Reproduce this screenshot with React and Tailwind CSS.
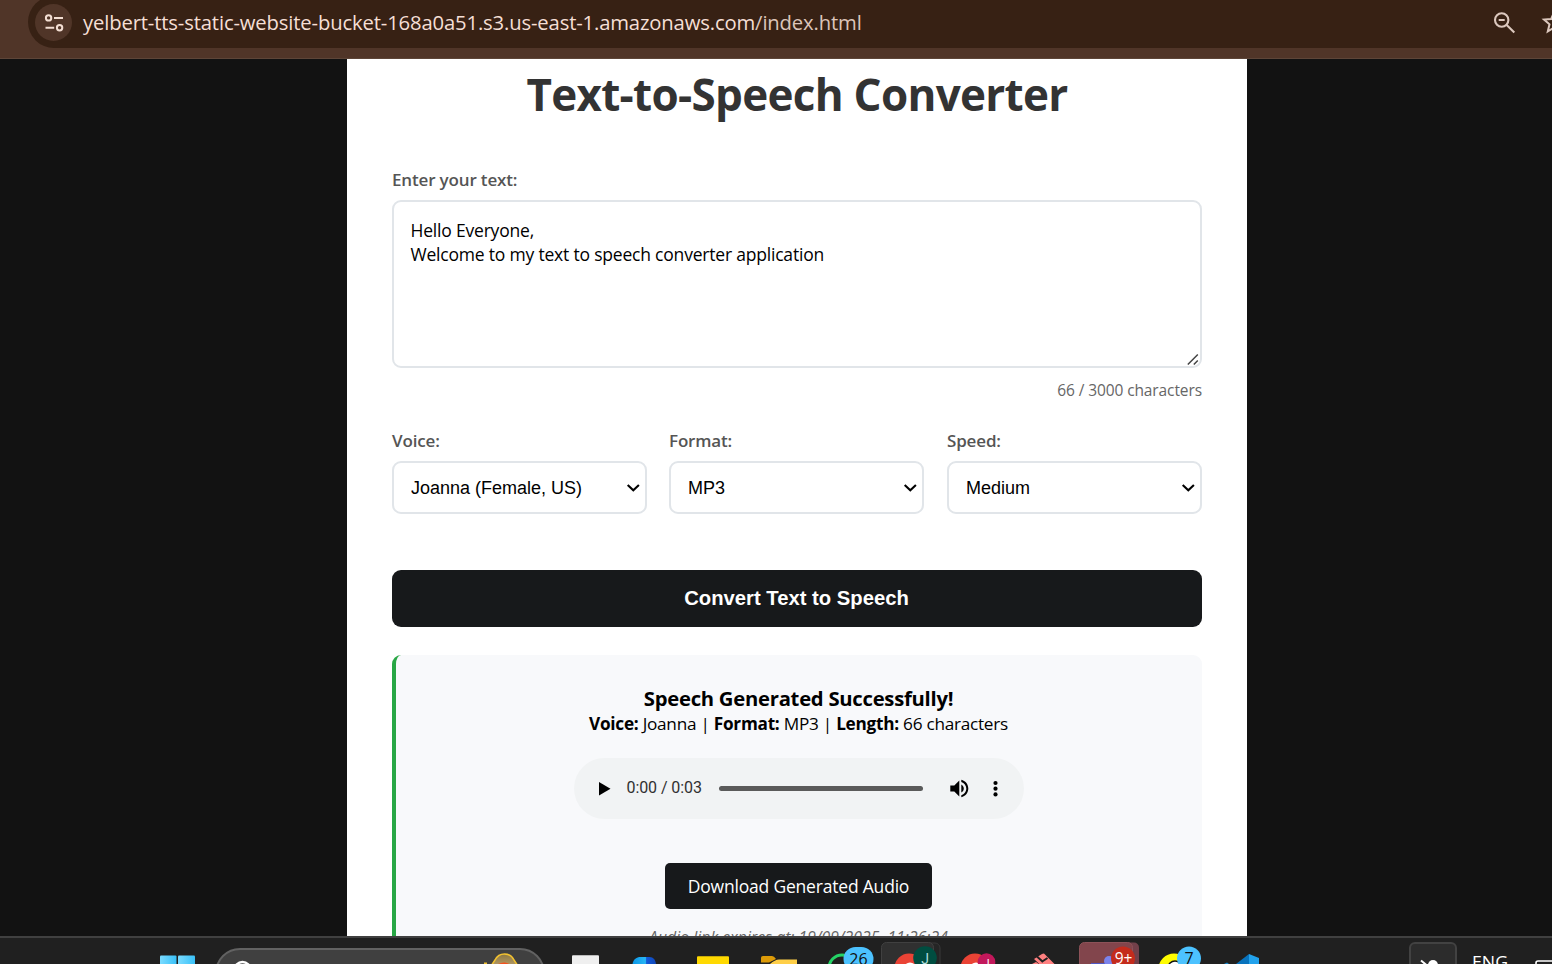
import React from "react";

const Chevron = () => (
  <svg className="pointer-events-none absolute right-[6px] top-5 h-3.5 w-4" viewBox="0 0 16 14" fill="none" stroke="#000" strokeWidth="2.1">
    <path d="M2.7 3.9 L8.3 9.2 L13.9 3.9" />
  </svg>
);

function Field({ label, value }) {
  return (
    <div className="w-[255px]">
      <label className="block h-[26px] text-[17px] leading-[26px] font-semibold tracking-[-0.16px] text-[#555]">{label}</label>
      <div className="relative mt-[7px]">
        <select className="block h-[53px] w-full appearance-none rounded-[9px] border-2 border-[#e1e5e9] bg-white pt-[2px] pl-[17px] font-['Liberation_Sans',sans-serif] text-[18px] text-black">
          <option>{value}</option>
        </select>
        <Chevron />
      </div>
    </div>
  );
}

function AddressBar() {
  return (
    <header className="flex h-[59px] items-start overflow-hidden border-b border-[#5d4538] bg-[#503528] pl-7">
      <div className="-mt-1 flex h-[52px] flex-1 items-center rounded-l-full bg-[#372114] pl-[7px]">
        <div className="flex h-[37px] w-[37px] items-center justify-center rounded-full bg-[#503528]">
          <svg className="h-5 w-5" viewBox="0 0 20 20" fill="none" stroke="#f3ded3" strokeWidth="2">
            <circle cx="4.6" cy="5.9" r="2.7" />
            <path d="M10 5.9h9M1.5 15.8h8.7" />
            <circle cx="15.6" cy="15.8" r="2.7" />
          </svg>
        </div>
        <div className="ml-[11px] flex-1 whitespace-nowrap text-[20.25px] leading-[30px] tracking-[-0.15px] text-[#f5dfd5]">
          yelbert-tts-static-website-bucket-168a0a51.s3.us-east-1.amazonaws.com<span className="text-[#dcc5ba]">/index.html</span>
        </div>
        <svg className="mr-[25px] h-6 w-6" viewBox="0 0 24 24" fill="none" stroke="#dcc8be" strokeWidth="2.1">
          <circle cx="9.7" cy="10" r="6.7" />
          <path d="M14.7 15 L22.3 22.6M6.700 10h6" />
        </svg>
        <svg className="-mr-[15px] h-[26px] w-[26px]" viewBox="0 0 26 26" fill="none" stroke="#dcc8be" strokeWidth="2">
          <path d="M13 3.5 L15.8 10 L23 10.6 L17.5 15.3 L19.2 22.3 L13 18.6 L6.8 22.3 L8.5 15.3 L3 10.6 L10.2 10Z" />
        </svg>
      </div>
    </header>
  );
}

function AudioPlayer() {
  return (
    <div className="mt-[22px] flex h-[61px] w-[450px] items-center rounded-full bg-[#f1f3f4] pl-[25px]">
      <svg className="h-[14px] w-3" viewBox="0 0 12 14"><path d="M0 0v13.4L11.5 6.7z" /></svg>
      <span className="ml-4 w-[76px] whitespace-nowrap pb-[2px] font-[Roboto,sans-serif] text-[16px] leading-6 tracking-[-0.08px] text-[#303030]">0:00 / 0:03</span>
      <div className="ml-4 h-[5px] w-[204px] rounded-full bg-[#5a5a5a]" />
      <svg className="ml-6 h-6 w-6" viewBox="0 0 24 24">
        <path transform="translate(.3 -.4)" d="M3 9v6h4l5 5V4L7 9H3zm13.5 3c0-1.77-1.02-3.29-2.5-4.03v8.05c1.48-.73 2.5-2.25 2.5-4.02zM14 3.23v2.06c2.89.86 5 3.54 5 6.71s-2.11 5.85-5 6.71v2.06c4.01-.91 7-4.49 7-8.77s-2.99-7.86-7-8.77z" />
      </svg>
      <svg className="ml-[15px] h-5 w-[18px]" viewBox="0 0 18 20">
        <circle cx="9.5" cy="4" r="2.1" /><circle cx="9.5" cy="9.7" r="2.1" /><circle cx="9.5" cy="15.4" r="2.1" />
      </svg>
    </div>
  );
}

function Taskbar() {
  return (
    <footer className="relative h-7 overflow-hidden border-t-2 border-[#404040] bg-[#202020]">
      <svg className="block h-[26px] w-full" viewBox="0 938 1552 26" fontFamily="Open Sans, sans-serif">
        <defs>
          <linearGradient id="win" x1="0" x2="1"><stop stopColor="#7bdbff" /><stop offset="1" stopColor="#39c1f8" /></linearGradient>
          <linearGradient id="edge" x1="0" x2="1"><stop stopColor="#0c97e8" /><stop offset=".55" stopColor="#27b6f5" /><stop offset=".6" stopColor="#1258d8" /><stop offset="1" stopColor="#1047b8" /></linearGradient>
          <linearGradient id="bell" x1="0" y1="0" x2="0" y2="1"><stop stopColor="#8d7740" /><stop offset="1" stopColor="#b59c68" /></linearGradient>
        </defs>
        <rect x="160" y="955.5" width="16.5" height="17" rx="1" fill="url(#win)" />
        <rect x="178" y="955.5" width="17" height="17" rx="1" fill="url(#win)" />
        <rect x="216" y="949" width="328" height="48" rx="24" fill="#404040" stroke="#626262" strokeWidth="2" />
        <circle cx="242.5" cy="970" r="8" fill="none" stroke="#fff" strokeWidth="2.5" />
        <path d="M491 966q2-3 4-6 3-6 9.500-6t9.500 6q2 3 4 6z" fill="url(#bell)" stroke="#f2c230" strokeWidth="1.5" />
        <path d="M498 964c4-2 8-2 11 0z" fill="#f4511e" />
        <path d="M484 963.5h3" stroke="#f2c230" strokeWidth="2" />
        <rect x="572" y="955.3" width="27" height="14" rx="1" fill="#efefef" />
        <path d="M632.5 964c1-5 4-7 8-7h9c4 0 6 3 6.500 7z" fill="url(#edge)" />
        <rect x="697" y="956.3" width="32" height="14" rx="1" fill="#ffd900" />
        <path d="M761 964h9q5-4.500 9-4.500h18v4.500z" fill="#ffcf48" />
        <path d="M761 962.5v-5q0-1.500 2-1.500h9q2 0 4 3l-7 3.500z" fill="#dd9b08" />
        <circle cx="842" cy="968" r="13" fill="#20201f" stroke="#25d366" strokeWidth="3" />
        <rect x="843.5" y="947" width="30" height="24" rx="12" fill="#4cc2ff" />
        <text x="858.5" y="964.5" fontSize="16" textAnchor="middle" fill="#111">26</text>
        <rect x="888" y="943" width="52" height="40" rx="5" fill="#252525" stroke="#383838" />
        <rect x="881.5" y="942.5" width="52" height="40" rx="5" fill="#303030" stroke="#404040" />
        <circle cx="909" cy="968" r="14.5" fill="#ea4335" />
        <circle cx="910" cy="969" r="6.5" fill="#fff" />
        <circle cx="925" cy="958" r="11.8" fill="#004d40" />
        <text x="925" y="964" fontSize="14" fontFamily="Roboto, sans-serif" textAnchor="middle" fill="#b2dfdb">J</text>
        <circle cx="975" cy="968" r="14.5" fill="#ea4335" />
        <circle cx="976" cy="969" r="6.5" fill="#fff" />
        <circle cx="986.5" cy="962" r="8.8" fill="#c2185b" />
        <text x="986.5" y="966.5" fontSize="11" fontFamily="Roboto, sans-serif" textAnchor="middle" fill="#fff">J</text>
        <path d="M1034 959l8-5q2-1 3 .5l11 11h-15z" fill="#ff8080" />
        <path d="M1037 956.5l6 5.500M1041.500 962l6-4" stroke="#202020" strokeWidth="2" />
        <path d="M1032 964l4-2 3 2z" fill="#ff8080" />
        <rect x="1085" y="942.5" width="54" height="40" rx="5" fill="#72404a" />
        <rect x="1079.5" y="942.5" width="53" height="40" rx="5" fill="#82454c" stroke="#8d5258" />
        <rect x="1091" y="963" width="14" height="6" fill="#4f59c7" />
        <circle cx="1109" cy="961" r="5" fill="#7b83eb" />
        <circle cx="1123" cy="958.5" r="12" fill="#c42b1c" />
        <text x="1123.5" y="963.8" fontSize="15.5" textAnchor="middle" fill="#fff">9+</text>
        <circle cx="1174" cy="969" r="15.5" fill="#fffc00" />
        <circle cx="1175" cy="968" r="7" fill="#fff" stroke="#111" strokeWidth="1.5" />
        <circle cx="1189" cy="958.5" r="12" fill="#4cc2ff" />
        <text x="1189" y="964.3" fontSize="16" textAnchor="middle" fill="#111">7</text>
        <path d="M1236 964l13-10v10z" fill="#0873bd" />
        <path d="M1249 954l10 4v6h-10z" fill="#22a2ec" />
        <path d="M1224 964l3-1.5 2 1.5z" fill="#1788cc" />
        <rect x="1410" y="943" width="46" height="40" rx="5" fill="#2c2c2c" stroke="#424242" strokeWidth="2" />
        <path d="M1421 960.5l6 5" stroke="#fff" strokeWidth="2" />
        <circle cx="1433" cy="965" r="5" fill="#fff" />
        <text x="1472" y="967.5" fontSize="17" textLength="36" lengthAdjust="spacingAndGlyphs" fill="#fff">ENG</text>
        <path d="M1536 966v-3q0-2 2-2h14" fill="none" stroke="#fff" strokeWidth="1.6" />
      </svg>
    </footer>
  );
}

export default function App() {
  return (
    <div className="h-[964px] w-[1552px] overflow-hidden bg-[#121212] font-['Open_Sans','Noto_Sans',sans-serif]">
      <AddressBar />
      <main className="h-[877px] overflow-hidden pl-[347px]">
        <div className="h-[900px] w-[900px] bg-white px-[45px] pt-[5px]">
          <h1 className="h-[60px] whitespace-nowrap text-center text-[44px] leading-[60px] font-bold tracking-[-0.7px] text-[#333]">Text-to-Speech Converter</h1>
          <label className="mt-[43px] block h-[26px] text-[17px] leading-[26px] font-semibold tracking-[-0.16px] text-[#555]">Enter your text:</label>
          <div className="relative mt-[7px] h-[168px]">
            <textarea
              className="block h-full w-full resize-none rounded-[9px] border-2 border-[#e1e5e9] bg-white px-[16.5px] py-4 text-[17.5px] leading-6 tracking-[-0.2px] text-black"
              defaultValue={"Hello Everyone,\nWelcome to my text to speech converter application"}
            />
            <svg className="absolute bottom-[3px] right-[3px] h-3 w-3" viewBox="0 0 12 12" fill="none" stroke="#444" strokeWidth="1.5">
              <path d="M.8 11.5 L10.8 1.500M6.800 11.5 L10.8 7.500" />
            </svg>
          </div>
          <p className="mt-[9px] h-[26px] text-right text-[15.5px] leading-[26px] tracking-[-0.1px] text-[#666]">66 / 3000 characters</p>
          <div className="mt-[25px] grid grid-cols-[277px_278px_255px]">
            <Field label="Voice:" value="Joanna (Female, US)" />
            <Field label="Format:" value="MP3" />
            <Field label="Speed:" value="Medium" />
          </div>
          <button className="mt-14 block h-[57px] w-full rounded-[9px] bg-[#17191b] pr-[1px] font-['Liberation_Sans',sans-serif] text-[20.25px] font-bold text-white">Convert Text to Speech</button>
          <section className="mt-7 flex h-[320px] flex-col items-center rounded-[9px] border-l-4 border-[#28a745] bg-[#f8f9fb] pt-[30px] pr-px text-black">
            <h3 className="h-[26px] whitespace-nowrap text-[20.25px] leading-[26px] font-bold tracking-[-0.26px]">Speech Generated Successfully!</h3>
            <p className="h-[25px] whitespace-nowrap text-[17.2px] leading-[26px] tracking-[-0.26px]">
              <b>Voice:</b> Joanna | <b>Format:</b> MP3 | <b>Length:</b> 66 characters
            </p>
            <AudioPlayer />
            <button className="mt-11 h-[46px] w-[267px] rounded-[5px] bg-[#17191b] text-[17.5px] tracking-[-0.2px] text-white">Download Generated Audio</button>
            <p className="mt-4 h-6 whitespace-nowrap text-[15.75px] leading-6 tracking-[0.05px] italic text-[#666]">Audio link expires at: 19/09/2025, 11:26:24</p>
          </section>
        </div>
      </main>
      <Taskbar />
    </div>
  );
}
